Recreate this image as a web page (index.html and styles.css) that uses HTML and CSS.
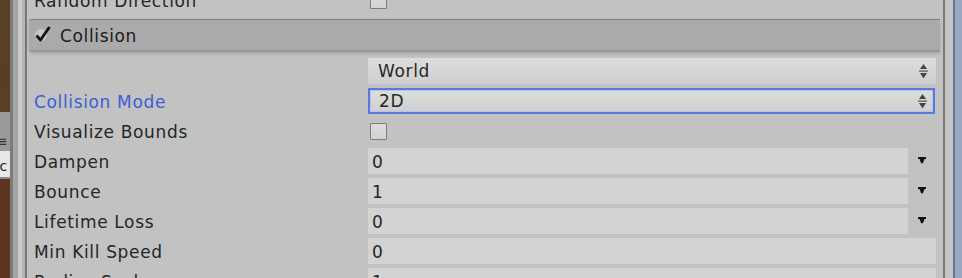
FILE: index.html
```html
<!DOCTYPE html>
<html lang="en">
<head>
    <meta charset="UTF-8">
    <title>Inspector - Collision</title>
    <link rel="stylesheet" href="styles.css">
</head>
<body>
    <div class="window">
        <div class="scene-edge">
            <div class="scene">
                <div class="scene-top"></div>
                <div class="scene-toolbar">&#8801;</div>
                <div class="scene-tab">nc</div>
                <div class="scene-bottom"></div>
            </div>
            <div class="splitter"></div>
        </div>

        <div class="inspector">
            <div class="module">
                <div class="row">
                    <span class="label">Random Direction</span>
                    <div class="field"><span class="checkbox"></span></div>
                </div>

                <div class="module-header">
                    <svg class="toggle" width="20" height="20" viewBox="0 0 20 20">
                        <circle cx="8" cy="10" r="6" fill="#c6c6c6"/>
                        <path d="M3.5 10.5 L7.5 15 L16.5 2" fill="none" stroke="#111" stroke-width="2.8" stroke-linejoin="round"/>
                    </svg>
                    <span class="module-title">Collision</span>
                </div>

                <div class="row">
                    <span class="label"></span>
                    <div class="field">
                        <div class="popup">
                            <span>World</span>
                            <svg class="stepper" width="9" height="15" viewBox="0 0 9 15">
                                <path d="M4.5 0 L8 5 L1 5 Z" fill="#444"/>
                                <rect x="0" y="6.5" width="9" height="1.2" fill="#555"/>
                                <path d="M1 9 L8 9 L4.5 14.5 Z" fill="#444"/>
                            </svg>
                        </div>
                    </div>
                </div>

                <div class="row">
                    <span class="label active">Collision Mode</span>
                    <div class="field">
                        <div class="popup focused">
                            <span>2D</span>
                            <svg class="stepper" width="9" height="15" viewBox="0 0 9 15">
                                <path d="M4.5 0 L8 5 L1 5 Z" fill="#444"/>
                                <rect x="0" y="6.5" width="9" height="1.2" fill="#555"/>
                                <path d="M1 9 L8 9 L4.5 14.5 Z" fill="#444"/>
                            </svg>
                        </div>
                    </div>
                </div>

                <div class="row">
                    <span class="label">Visualize Bounds</span>
                    <div class="field"><span class="checkbox"></span></div>
                </div>

                <div class="row">
                    <span class="label">Dampen</span>
                    <div class="field">
                        <div class="number">0</div>
                        <span class="curve-btn">
                            <svg width="9" height="8" viewBox="0 0 9 8"><path d="M0 0 H8 V2 H6.5 L5 6 H3 L1.5 2 H0 Z" fill="#111"/><rect x="3.5" y="6" width="1" height="1.5" fill="#888"/></svg>
                        </span>
                    </div>
                </div>

                <div class="row">
                    <span class="label">Bounce</span>
                    <div class="field">
                        <div class="number">1</div>
                        <span class="curve-btn">
                            <svg width="9" height="8" viewBox="0 0 9 8"><path d="M0 0 H8 V2 H6.5 L5 6 H3 L1.5 2 H0 Z" fill="#111"/><rect x="3.5" y="6" width="1" height="1.5" fill="#888"/></svg>
                        </span>
                    </div>
                </div>

                <div class="row">
                    <span class="label">Lifetime Loss</span>
                    <div class="field">
                        <div class="number">0</div>
                        <span class="curve-btn">
                            <svg width="9" height="8" viewBox="0 0 9 8"><path d="M0 0 H8 V2 H6.5 L5 6 H3 L1.5 2 H0 Z" fill="#111"/><rect x="3.5" y="6" width="1" height="1.5" fill="#888"/></svg>
                        </span>
                    </div>
                </div>

                <div class="row">
                    <span class="label">Min Kill Speed</span>
                    <div class="field"><div class="number">0</div></div>
                </div>

                <div class="row">
                    <span class="label">Radius Scale</span>
                    <div class="field"><div class="number">1</div></div>
                </div>
            </div>
        </div>

        <div class="scrollbar"></div>
    </div>
</body>
</html>
```

FILE: styles.css
```css
body {
    margin: 0;
    padding: 0;
    background-color: #c2c2c2;
    font-family: "DejaVu Sans", Verdana, sans-serif;
    font-size: 17px;
    letter-spacing: 0.65px;
    color: #262626;
    overflow: hidden;
}
.window {
    display: flex;
    width: 962px;
    height: 278px;
    overflow: hidden;
}

/* scene view sliver on the left */
.scene-edge {
    display: flex;
    flex-shrink: 0;
    width: 27px;
}
.scene {
    display: flex;
    flex-direction: column;
    width: 10px;
    overflow: hidden;
}
.scene-top {
    height: 112px;
    background: linear-gradient(180deg, #574023, #5a3f22);
}
.scene-toolbar {
    height: 39px;
    background-color: #9a9a9a;
    color: #333;
    font-size: 14px;
    line-height: 14px;
    padding-top: 22px;
    box-sizing: border-box;
    text-indent: -4px;
}
.scene-tab {
    height: 28px;
    background-color: #e8e8e8;
    border-bottom: 2px solid #8a8a8a;
    box-sizing: border-box;
    font-size: 14px;
    line-height: 30px;
    text-indent: -10px;
    color: #222;
}
.scene-bottom {
    flex: 1;
    background-color: #5b3520;
}
.splitter {
    width: 17px;
    background: linear-gradient(90deg,
        #7c7c7c 0, #7c7c7c 3px,
        #a6a6a6 3px, #a6a6a6 8px,
        #cacaca 8px, #cacaca 12px,
        #b5b5b5 12px, #b5b5b5 15px,
        #777 15px, #777 17px);
}

/* inspector */
.inspector {
    flex: 1;
    overflow: hidden;
    background-color: #c2c2c2;
}
.module {
    margin-top: -15px;
}
.row {
    display: flex;
    align-items: center;
    height: 30px;
}
.label {
    width: 334px;
    padding-left: 7px;
    padding-top: 2px;
    flex-shrink: 0;
    white-space: nowrap;
}
.label.active {
    color: #3b5ed8;
}
.field {
    flex: 1;
    display: flex;
    align-items: center;
    padding-right: 7px;
    height: 30px;
}

.module-header {
    display: flex;
    align-items: center;
    height: 30px;
    margin: 4px 3px 4px 2px;
    background-color: #aaaaaa;
    border-top: 1px solid #7f7f7f;
    border-bottom: 2px solid #979797;
    border-radius: 3px 0 0 3px;
    box-shadow: 0 2px 3px rgba(0, 0, 0, 0.12);
}
.toggle {
    margin-left: 4px;
    margin-right: 7px;
}
.module-title {
    color: #1c1c1c;
    padding-top: 2px;
}

.checkbox {
    display: block;
    width: 15px;
    height: 15px;
    margin-left: 2px;
    border: 1px solid #7d7d7d;
    border-radius: 1px;
    background: linear-gradient(180deg, #dedede, #d2d2d2);
}

.popup {
    flex: 1;
    display: flex;
    align-items: center;
    justify-content: space-between;
    height: 26px;
    line-height: 28px;
    padding: 0 8px 0 10px;
    box-sizing: border-box;
    background: linear-gradient(180deg, #dddddd, #cfcfcf);
}
.popup.focused {
    border: 2px solid #5a78e0;
    box-shadow: inset 0 0 0 1px #b9c3e2;
    padding: 0 6px 0 9px;
    margin-right: 1px;
}
.stepper {
    display: block;
}

.number {
    flex: 1;
    height: 26px;
    line-height: 28px;
    padding-left: 4px;
    background-color: #d3d3d3;
}
.curve-btn {
    display: flex;
    justify-content: center;
    width: 28px;
}
.curve-btn svg {
    display: block;
}

/* right scrollbar edge */
.scrollbar {
    flex-shrink: 0;
    width: 19px;
    background: linear-gradient(90deg,
        #787878 0, #787878 2px,
        #c6c6c6 2px, #c6c6c6 10px,
        #66759a 10px, #66759a 12px,
        #9aa7c3 12px);
}
```
